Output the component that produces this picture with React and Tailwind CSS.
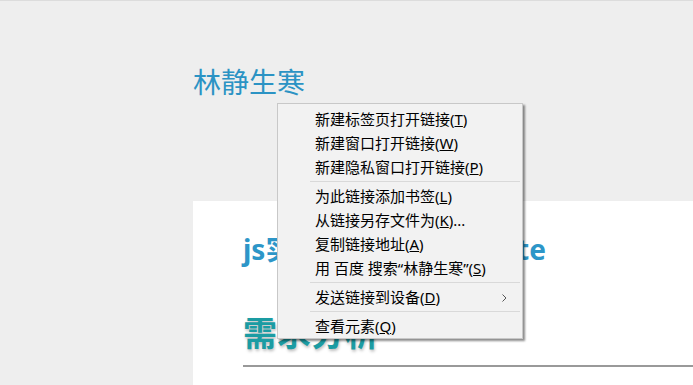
import React from "react";

const font = { fontFamily: '"Noto Sans", "Noto Sans CJK SC", sans-serif' };

function Item({ children, arrow }) {
  return (
    <div className="relative flex h-6 items-center pl-[37px] text-[15px] leading-none text-black">
      <span>{children}</span>
      {arrow && (
        <svg className="absolute right-[15px] top-[9px]" width="5" height="8" viewBox="0 0 5 8">
          <path d="M0.5 0.5 L4 4 L0.5 7.5" fill="none" stroke="#555" strokeWidth="1" />
        </svg>
      )}
    </div>
  );
}

function Sep() {
  return <div className="my-[2px] ml-[32px] mr-[2px] h-px bg-[#d9d9d9]" />;
}

export default function App() {
  return (
    <div className="relative h-[385px] w-[693px] overflow-hidden bg-[#eeeeee]" style={font}>
      <div className="h-px bg-[#dcdcdc]" />
      <div className="pl-[193px] pt-[67px] text-[28px] leading-[28px] text-[#2b93c4]">林静生寒</div>
      <div className="ml-[193px] mt-[105px] h-[300px] bg-white pl-[50px] pt-[33px]">
        <div className="flex w-[303px] justify-between whitespace-nowrap text-[28px] font-bold leading-[30px] text-[#2d96c8]">
          <span>js实现复制粘贴</span>
          <span>paste</span>
        </div>
        <div className="mt-[51px] border-b-2 border-[#999999] pb-[14px] text-[34px] font-bold leading-[36px] text-[#1b9ca3] [text-shadow:1px_2px_3px_rgba(0,0,0,0.25)]">
          需求分析
        </div>
      </div>

      <div className="absolute left-[277px] top-[103px] w-[246px] border border-[#c8c8c8] bg-[#f2f2f2] pt-[3px] shadow-[2px_2px_2px_rgba(0,0,0,0.45)]">
        <Item>新建标签页打开链接(<u>T</u>)</Item>
        <Item>新建窗口打开链接(<u>W</u>)</Item>
        <Item>新建隐私窗口打开链接(<u>P</u>)</Item>
        <Sep />
        <Item>为此链接添加书签(<u>L</u>)</Item>
        <Item>从链接另存文件为(<u>K</u>)...</Item>
        <Item>复制链接地址(<u>A</u>)</Item>
        <Item>用 百度 搜索“林静生寒”(<u>S</u>)</Item>
        <Sep />
        <Item arrow>发送链接到设备(<u>D</u>)</Item>
        <Sep />
        <Item>查看元素(<u>Q</u>)</Item>
      </div>
    </div>
  );
}
